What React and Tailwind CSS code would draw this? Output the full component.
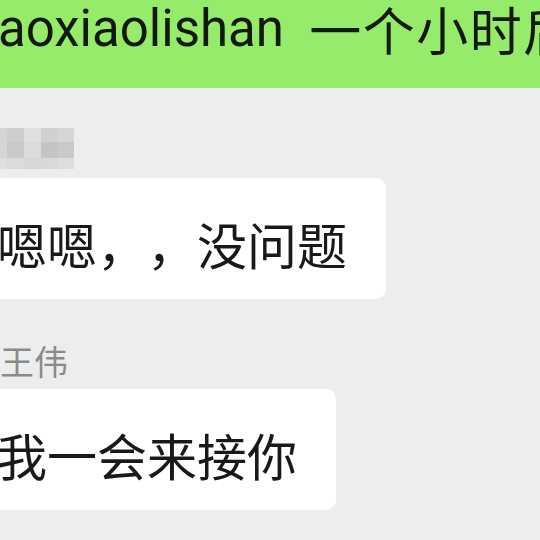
const blur = [
  ["#d4d4d4", "#cecece", "#dfdfdf", "#d0d0d0", "#d5d5d5"],
  ["#d6d6d6", "#c9c9c9", "#dbdbdb", "#c4c4c4", "#c9c9c9"],
  ["#dfdfdf", "#dbdbdb", "#d7d7d7", "#d9d9d9", "#dddddd"],
];
const colW = [7, 17, 17, 16, 17];
const rowH = [14, 16, 11];

function BlurredName() {
  return (
    <div className="flex flex-col">
      {blur.map((row, r) => (
        <div key={r} className="flex">
          {row.map((c, i) => (
            <div key={i} style={{ width: colW[i], height: rowH[r], background: c }} />
          ))}
        </div>
      ))}
    </div>
  );
}

function Bubble({ children }) {
  return (
    <div className="-ml-[43px] flex">
      <div className="rounded-[10px] bg-white pl-[40px] pr-[39px] pt-[40px] pb-[31px] text-[50px] leading-[50px] text-[#191919] whitespace-nowrap [text-spacing-trim:space-all]">
        {children}
      </div>
    </div>
  );
}

export default function App() {
  return (
    <div className="h-[540px] w-[540px] overflow-hidden bg-[#ededed] font-['Noto_Sans_CJK_SC',sans-serif]">
      <div className="flex h-[88px] items-start bg-[#97eb6b] pt-[3px] -ml-[2px] leading-[52px] text-[#111a0c] whitespace-pre">
        <span className="font-[Roboto,sans-serif] text-[51px]">{"aoxiaolishan  "}</span>
        <span className="text-[52px] tracking-[1.5px]">一个小时后到</span>
      </div>

      <div className="mt-[40px]">
        <BlurredName />
      </div>

      <div className="mt-[9px]">
        <Bubble>嗯嗯，，没问题</Bubble>
      </div>

      <div className="mt-[45px] text-[34px] leading-[34px] text-[#8a8a8a]">王伟</div>

      <div className="mt-[11px]">
        <Bubble>我一会来接你</Bubble>
      </div>
    </div>
  );
}
